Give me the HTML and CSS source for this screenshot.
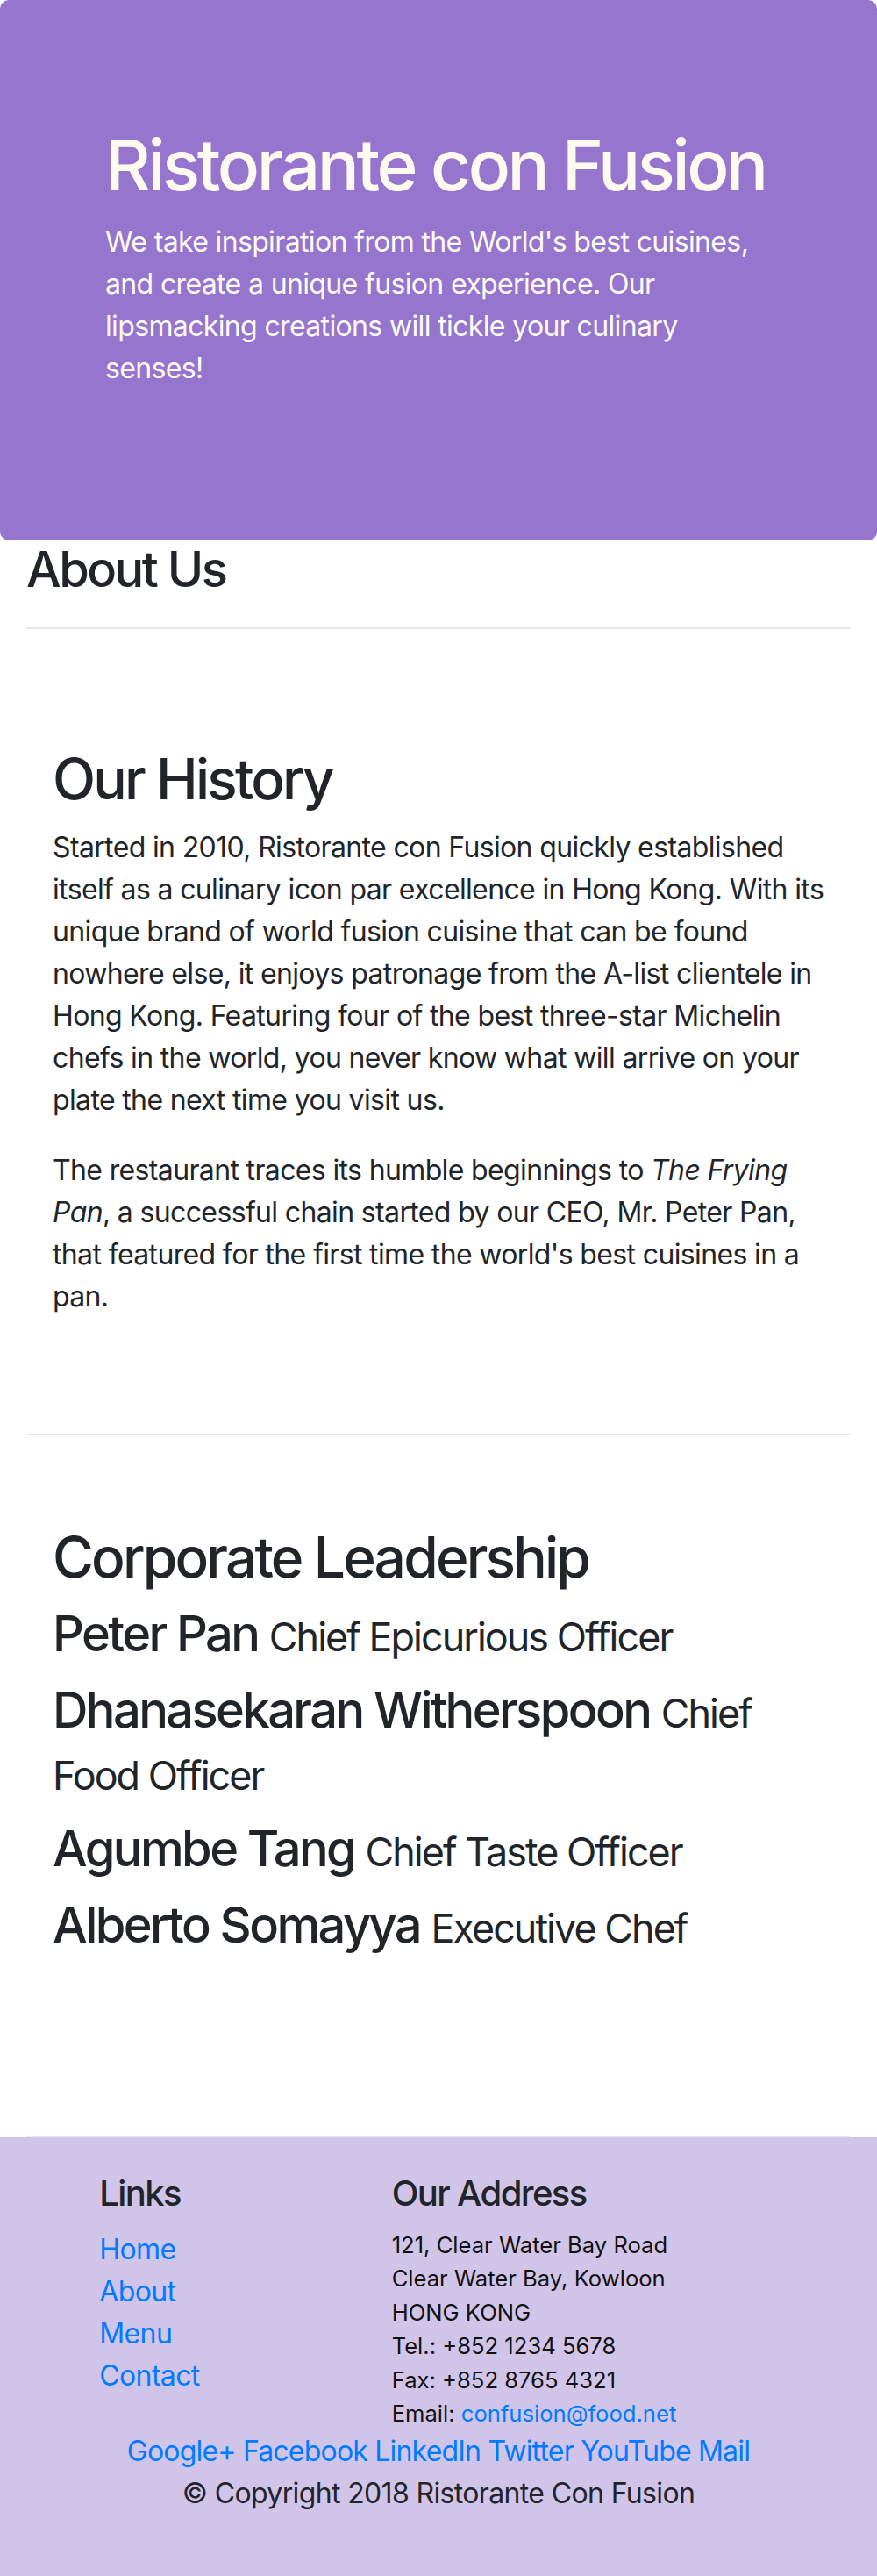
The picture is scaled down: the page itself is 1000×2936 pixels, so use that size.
FILE: index.html
```html
<!DOCTYPE html>
<html lang="en">
<head>
<meta charset="utf-8">
<title>Ristorante con Fusion - About Us</title>
<link rel="stylesheet" href="styles.css">
</head>
<body>
<header class="jumbotron">
  <div class="jumbo-inner">
    <h1 class="brand-title">Ristorante con Fusion</h1>
    <p class="brand-lead">We take inspiration from the World's best cuisines, and create a unique fusion experience. Our lipsmacking creations will tickle your culinary senses!</p>
  </div>
</header>

<main class="container">
  <div class="page-head">
    <h3 class="page-title">About Us</h3>
    <hr class="rule">
  </div>

  <section class="row-content">
    <h2 class="section-title">Our History</h2>
    <p class="text">Started in 2010, Ristorante con Fusion quickly established itself as a culinary icon par excellence in Hong Kong. With its unique brand of world fusion cuisine that can be found nowhere else, it enjoys patronage from the A-list clientele in Hong Kong. Featuring four of the best three-star Michelin chefs in the world, you never know what will arrive on your plate the next time you visit us.</p>
    <p class="text">The restaurant traces its humble beginnings to <em>The Frying Pan</em>, a successful chain started by our CEO, Mr. Peter Pan, that featured for the first time the world's best cuisines in a pan.</p>
  </section>

  <section class="row-content">
    <h2 class="section-title">Corporate Leadership</h2>
    <h3 class="leader">Peter Pan <small class="role">Chief Epicurious Officer</small></h3>
    <h3 class="leader">Dhanasekaran Witherspoon <small class="role">Chief Food Officer</small></h3>
    <h3 class="leader">Agumbe Tang <small class="role">Chief Taste Officer</small></h3>
    <h3 class="leader">Alberto Somayya <small class="role">Executive Chef</small></h3>
  </section>
</main>

<footer class="footer">
  <div class="footer-row">
    <div class="col-links">
      <h5 class="footer-title">Links</h5>
      <ul class="link-list">
        <li><a href="#">Home</a></li>
        <li><a href="#">About</a></li>
        <li><a href="#">Menu</a></li>
        <li><a href="#">Contact</a></li>
      </ul>
    </div>
    <div class="col-address">
      <h5 class="footer-title">Our Address</h5>
      <address class="address">121, Clear Water Bay Road<br>Clear Water Bay, Kowloon<br>HONG KONG<br>Tel.: +852 1234 5678<br>Fax: +852 8765 4321<br>Email: <a href="#">confusion@food.net</a></address>
    </div>
    <div class="col-social">
      <a href="#">Google+</a> <a href="#">Facebook</a> <a href="#">LinkedIn</a> <a href="#">Twitter</a> <a href="#">YouTube</a> <a href="#">Mail</a>
    </div>
  </div>
  <p class="copyright">© Copyright 2018 Ristorante Con Fusion</p>
</footer>
</body>
</html>
```
FILE: styles.css
```css
* { box-sizing: border-box; }

html, body {
  margin: 0;
  padding: 0;
}

body {
  font-family: Inter, "Noto Sans", "Liberation Sans", sans-serif;
  font-size: 32px;
  line-height: 48px;
  color: #212529;
  background: #fff;
  letter-spacing: -0.02em;
}

a { color: #007bff; text-decoration: none; }

/* Jumbotron */
.jumbotron {
  background: #9575CD;
  color: floralwhite;
  padding: 140px 60px;
  border-radius: 10px;
}
.jumbo-inner { padding: 0 60px; }
.brand-title {
  font-size: 80px;
  line-height: 96px;
  font-weight: 500;
  letter-spacing: -0.043em;
  margin: 0 0 16px;
}
.brand-lead { margin: 0 0 32px; }

/* Main */
.container { padding: 0 30px; }
.page-title {
  font-size: 56px;
  line-height: 67px;
  font-weight: 500;
  letter-spacing: -0.045em;
  margin: 0;
}
.rule {
  border: 0;
  border-top: 2px solid rgba(0, 0, 0, 0.1);
  margin: 32px 0;
}

.row-content {
  padding: 100px 30px;
  min-height: 800px;
  border-bottom: 2px solid #e9e9ec;
}
.section-title {
  font-size: 64px;
  line-height: 77px;
  font-weight: 500;
  letter-spacing: -0.044em;
  margin: 0 0 16px;
}
.text { margin: 0 0 32px; }

.leader {
  font-size: 56px;
  line-height: 67px;
  font-weight: 500;
  letter-spacing: -0.046em;
  margin: 0 0 16px;
}
.role { font-size: 80%; font-weight: 400; letter-spacing: -0.043em; }

/* Footer */
.footer {
  background: #D1C4E9;
  padding: 40px 0;
}
.footer-row { display: flex; flex-wrap: wrap; }
.col-links { margin-left: 83.33px; width: 333.33px; padding: 0 30px; }
.col-address { width: 583.33px; padding: 0 30px; }
.col-social { width: 100%; padding: 0 30px; text-align: center; letter-spacing: -0.025em; }
.footer-title {
  font-size: 40px;
  line-height: 48px;
  font-weight: 500;
  letter-spacing: -0.04em;
  margin: 0 0 16px;
}
.link-list { list-style: none; padding: 0; margin: 0 0 32px; }
.address {
  font-style: normal;
  font-size: 25.6px;
  line-height: 38.4px;
  letter-spacing: 0;
  margin: 0;
  color: #111;
}
.copyright { text-align: center; margin: 0 0 32px; }
```
